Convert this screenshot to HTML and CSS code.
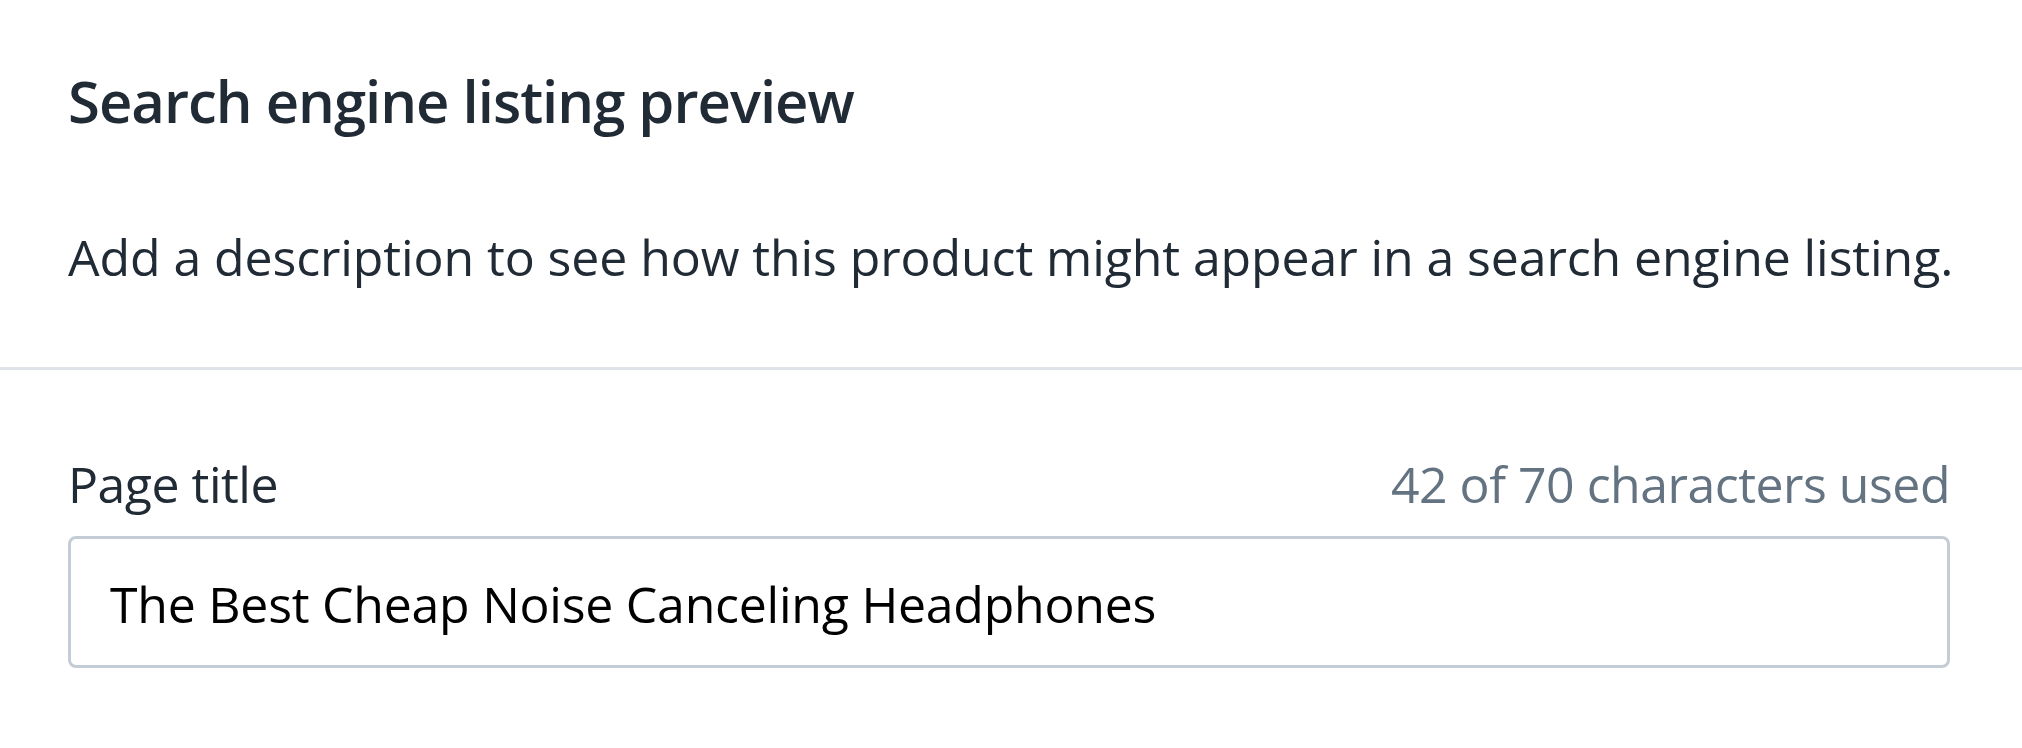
FILE: index.html
```html
<!DOCTYPE html>
<html lang="en">
<head>
    <meta charset="UTF-8">
    <meta name="viewport" content="width=device-width, initial-scale=1.0">
    <title>Search engine listing preview</title>
    <link rel="stylesheet" href="styles.css">
</head>
<body>

    <div class="card">
        <div class="card-section">
            <h2 class="card-title">Search engine listing preview</h2>
            <p class="card-text">Add a description to see how this product might appear in a search engine listing.</p>
        </div>

        <div class="card-section card-section-fields">
            <div class="field-label-row">
                <label for="page-title" class="field-label">Page title</label>
                <span class="field-count">42 of 70 characters used</span>
            </div>
            <input type="text" id="page-title" class="text-field" value="The Best Cheap Noise Canceling Headphones">
        </div>
    </div>

</body>
</html>
```

FILE: styles.css
```css
body {
    margin: 0;
    background-color: #ffffff;
    font-family: "Open Sans", "Noto Sans", sans-serif;
    color: #212b36;
}

.card {
    width: 100%;
}

.card-section {
    padding: 66px 72px 80px 68px;
}

.card-section-fields {
    border-top: 3px solid #dfe3e8;
    padding-top: 84px;
}

.card-title {
    margin: 0;
    font-size: 58px;
    line-height: 70px;
    font-weight: 600;
    letter-spacing: -1px;
}

.card-text {
    margin: 91px 0 0 0;
    font-size: 50px;
    line-height: 60px;
    letter-spacing: -0.1px;
    white-space: nowrap;
}

.field-label-row {
    display: flex;
    justify-content: space-between;
    font-size: 50px;
    line-height: 60px;
    letter-spacing: -0.5px;
}

.field-count {
    color: #637381;
}

.text-field {
    display: block;
    box-sizing: border-box;
    width: 100%;
    height: 132px;
    margin-top: 22px;
    padding: 3px 39px 0 39px;
    border: 3px solid #c4cdd5;
    border-radius: 8px;
    font-family: "Open Sans", "Noto Sans", sans-serif;
    font-size: 50px;
    letter-spacing: -0.25px;
    color: #000000;
    background-color: #ffffff;
    outline: none;
}
```
